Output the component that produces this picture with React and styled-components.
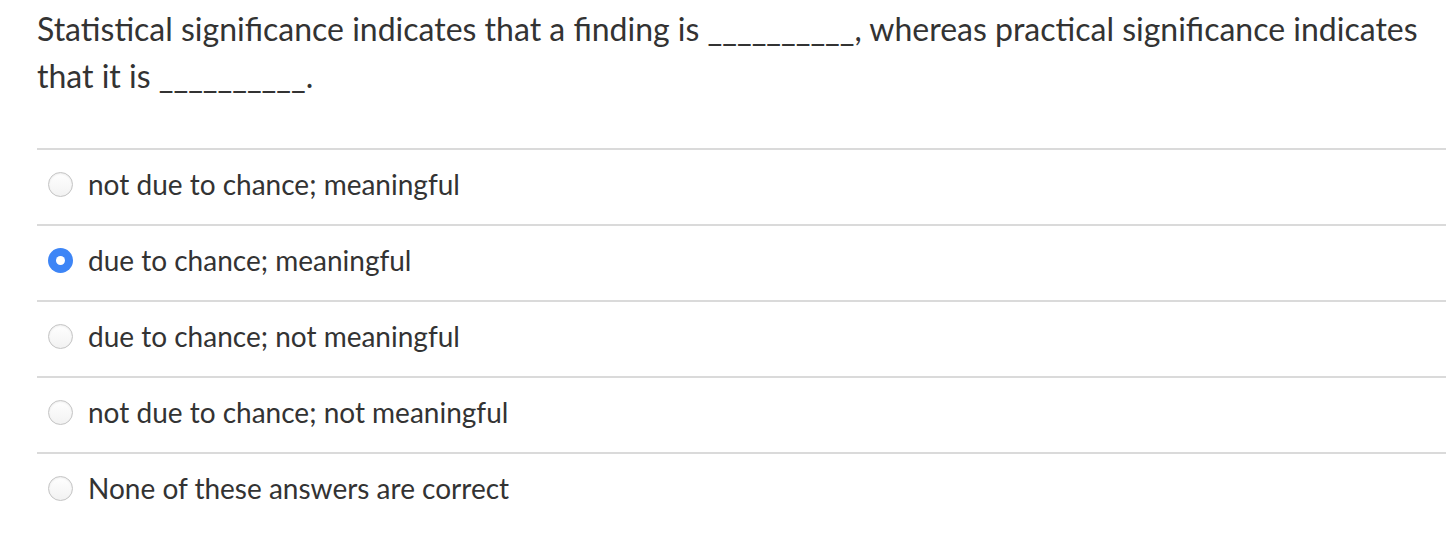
import React, { useState } from 'react'
import styled, { createGlobalStyle } from 'styled-components'

const GlobalStyle = createGlobalStyle`
body{
  margin:0;
  background:#fff;
  font-family:Lato, "Liberation Sans", sans-serif;
  color:#333;
}
`;

const answers = [
  "not due to chance; meaningful",
  "due to chance; meaningful",
  "due to chance; not meaningful",
  "not due to chance; not meaningful",
  "None of these answers are correct",
];

export default function App() {
  let [picked, setPicked] = useState(1);
  return (
    <>
      <GlobalStyle />
      <Quiz>
        <Question>
          Statistical significance indicates that a finding is __________, whereas practical significance indicates that it is __________.
        </Question>
        <AnswerList>
          {answers.map((a, i) => (
            <Answer key={i} onClick={() => setPicked(i)}>
              <Radio checked={picked === i} />
              <AnswerText>{a}</AnswerText>
            </Answer>
          ))}
        </AnswerList>
      </Quiz>
    </>
  )
}

const Quiz = styled.div`
padding:5px 2px 0px 37px;
`;

const Question = styled.p`
margin:0px;
font-size:32px;
line-height:47px;
font-weight:400;
max-width:1400px;
`;

const AnswerList = styled.div`
margin-top:49px;
display:flex;
flex-direction:column;
`;

const Answer = styled.div`
display:flex;
align-items:center;
gap:15px;
border-top:2px solid #dadada;
padding:13px 0px 19px 11px;
cursor:pointer;
`;

const Radio = styled.span`
flex:none;
width:25px;
height:25px;
border-radius:50%;
box-sizing:border-box;
background:${p => p.checked ? "#3d85f6" : "linear-gradient(#fff, #f2f2f2)"};
border:${p => p.checked ? "none" : "1px solid #c4c4c4"};
box-shadow:${p => p.checked ? "none" : "inset 0 1px 2px rgba(0,0,0,0.08)"};
display:flex;
align-items:center;
justify-content:center;
margin-top:1px;
&::after{
  content:"";
  display:${p => p.checked ? "block" : "none"};
  width:9px;
  height:9px;
  border-radius:50%;
  background:#fff;
}
`;

const AnswerText = styled.span`
font-size:28px;
line-height:42px;
`;
